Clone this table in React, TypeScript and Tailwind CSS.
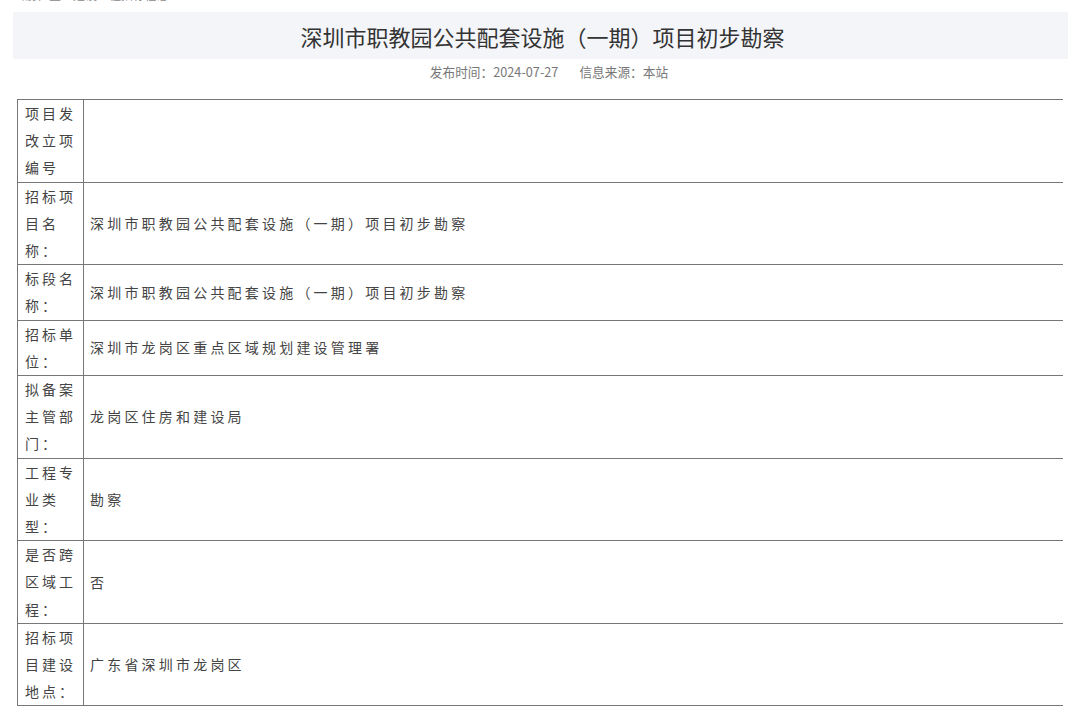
const rows: { label: string; value: string }[] = [
  { label: '项目发改立项编号', value: '' },
  { label: '招标项目名称：', value: '深圳市职教园公共配套设施（一期）项目初步勘察' },
  { label: '标段名称：', value: '深圳市职教园公共配套设施（一期）项目初步勘察' },
  { label: '招标单位：', value: '深圳市龙岗区重点区域规划建设管理署' },
  { label: '拟备案主管部门：', value: '龙岗区住房和建设局' },
  { label: '工程专业类型：', value: '勘察' },
  { label: '是否跨区域工程：', value: '否' },
  { label: '招标项目建设地点：', value: '广东省深圳市龙岗区' },
];

export default function App() {
  return (
    <div className="w-[1080px] h-[709px] overflow-hidden bg-white font-['Noto_Sans_CJK_SC','Noto_Sans',sans-serif]">
      {/* breadcrumb, scrolled mostly out of view */}
      <div className="h-[12px] overflow-hidden px-[13px]">
        <div className="-mt-[12px] text-[12px] leading-[14px] text-[#888]">当前位置：建设工程招标信息</div>
      </div>

      <div className="mx-[13px] w-[1055px] h-[47px] bg-[#f4f5f8] flex items-center justify-center">
        <h1 className="pl-[4px] text-[22px] text-[#333] leading-none">深圳市职教园公共配套设施（一期）项目初步勘察</h1>
      </div>

      <div className="pt-[6px] pl-[18px] flex justify-center gap-[21px] text-[12.7px] leading-[14px] text-[#777]">
        <span>发布时间：2024-07-27</span>
        <span>信息来源：本站</span>
      </div>

      <div className="mt-[20px] ml-[17px] w-[1046px] border-t border-l border-[#777]">
        {rows.map((r, i) => (
          <div key={i} className="grid grid-cols-[66px_1fr] border-b border-[#777]">
            <div className="border-r border-[#777] pl-[7px] pr-[5px] text-[14px] leading-[27.2px] tracking-[3px] text-[#444]">
              {r.label}
            </div>
            <div className="flex items-center pl-[6px] text-[14px] tracking-[3.2px] text-[#444]">{r.value}</div>
          </div>
        ))}
      </div>
    </div>
  );
}
